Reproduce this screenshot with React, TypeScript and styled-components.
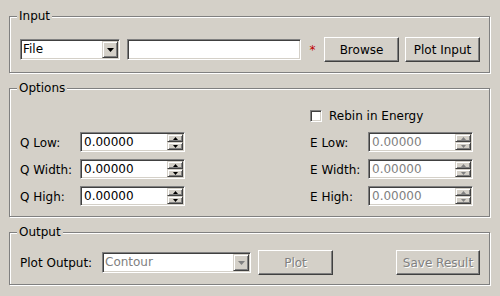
import React from "react";
import styled, { createGlobalStyle } from "styled-components";

const GlobalStyle = createGlobalStyle`
  html, body {
    margin: 0;
    padding: 0;
    background: #d4d0c8;
  }
  body {
    font-family: "DejaVu Sans", "Liberation Sans", sans-serif;
    font-size: 12px;
    color: #000;
  }
`;

const Page = styled.div`
  width: 500px;
  height: 296px;
  box-sizing: border-box;
  padding: 16px 10px 0 9px;
  display: flex;
  flex-direction: column;
  gap: 15px;
`;

const Group = styled.section<{ $pt: number; $pb: number }>`
  position: relative;
  border: 1px solid #808080;
  box-shadow: inset 1px 1px 0 #fff, 1px 1px 0 #fff;
  padding: ${(p) => p.$pt}px 9px ${(p) => p.$pb}px 10px;
`;

const GroupTitle = styled.span`
  position: absolute;
  top: -8px;
  left: 7px;
  padding: 0 2px;
  line-height: 14px;
  background: #d4d0c8;
`;

const Row = styled.div`
  display: flex;
  align-items: center;
`;

const ComboBox = styled.div<{ $width: number; $disabled?: boolean }>`
  width: ${(p) => p.$width}px;
  height: 21px;
  box-sizing: border-box;
  display: flex;
  align-items: center;
  background: #fff;
  border: 1px solid;
  border-color: #808080 #fff #fff #808080;
  box-shadow: inset 1px 1px 0 #404040, inset -1px -1px 0 #d4d0c8;
  padding: 1px;
  color: ${(p) => (p.$disabled ? "#808080" : "#000")};
`;

const ComboText = styled.span`
  flex: 1;
  padding-left: 1px;
  line-height: 17px;
`;

const ComboArrow = styled.div`
  width: 16px;
  height: 17px;
  box-sizing: border-box;
  display: flex;
  align-items: center;
  justify-content: center;
  background: #d4d0c8;
  border: 1px solid;
  border-color: #d4d0c8 #404040 #404040 #d4d0c8;
  box-shadow: inset 1px 1px 0 #fff, inset -1px -1px 0 #808080;
`;

const LineEdit = styled.div`
  width: 174px;
  height: 21px;
  margin-left: 7px;
  box-sizing: border-box;
  background: #fff;
  border: 1px solid;
  border-color: #808080 #fff #fff #808080;
  box-shadow: inset 1px 1px 0 #404040, inset -1px -1px 0 #d4d0c8;
`;

const Required = styled.span`
  width: 23px;
  text-align: center;
  color: #c00000;
  font-size: 12px;
`;

const PushButton = styled.div<{ $width: number; $gap?: number; $disabled?: boolean }>`
  width: ${(p) => p.$width}px;
  height: 25px;
  margin-left: ${(p) => p.$gap ?? 0}px;
  box-sizing: border-box;
  display: flex;
  align-items: center;
  justify-content: center;
  background: #d4d0c8;
  border: 1px solid;
  border-color: #fff #404040 #404040 #fff;
  box-shadow: inset -1px -1px 0 #808080;
  color: ${(p) => (p.$disabled ? "#808080" : "#000")};
  text-shadow: ${(p) => (p.$disabled ? "1px 1px 0 #fff" : "none")};
`;

const OptionsGrid = styled.div`
  display: grid;
  grid-template-columns: 60px 105px 1fr 58px 105px;
  grid-template-rows: 19px 21px 21px 21px;
  row-gap: 6px;
  margin-right: 7px;

  & > :first-child {
    margin-bottom: 1px;
  }
`;

const CheckRow = styled.label`
  grid-column: 4 / 6;
  display: flex;
  align-items: center;
  gap: 7px;
`;

const CheckBox = styled.span`
  width: 12px;
  height: 12px;
  box-sizing: border-box;
  background: #fff;
  border: 1px solid;
  border-color: #808080 #fff #fff #808080;
  box-shadow: inset 1px 1px 0 #404040, inset -1px -1px 0 #d4d0c8;
`;

const FieldLabel = styled.span<{ $col: number }>`
  grid-column: ${(p) => p.$col};
  align-self: center;
`;

const SpinBox = styled.div<{ $col: number; $disabled?: boolean }>`
  grid-column: ${(p) => p.$col};
  height: 20px;
  box-sizing: border-box;
  display: flex;
  align-items: center;
  background: #fff;
  border: 1px solid;
  border-color: #808080 #fff #fff #808080;
  box-shadow: inset 1px 1px 0 #404040, inset -1px -1px 0 #d4d0c8;
  padding: 1px;
  color: ${(p) => (p.$disabled ? "#808080" : "#000")};
`;

const SpinText = styled.span`
  flex: 1;
  padding-left: 2px;
`;

const SpinButtons = styled.div`
  display: flex;
  flex-direction: column;
  width: 16px;
  height: 16px;
`;

const SpinButton = styled.div`
  flex: 1;
  box-sizing: border-box;
  display: flex;
  align-items: center;
  justify-content: center;
  background: #d4d0c8;
  border: 1px solid;
  border-color: #d4d0c8 #404040 #404040 #d4d0c8;
  box-shadow: inset 1px 1px 0 #fff, inset -1px -1px 0 #808080;
`;

const OutputLabel = styled.span`
  width: 82px;
`;

const Spacer = styled.div`
  flex: 1;
`;

const Arrow = ({
  up,
  w,
  h,
  disabled,
}: {
  up?: boolean;
  w: number;
  h: number;
  disabled?: boolean;
}) => {
  const pts = up ? `0,${h} ${w / 2},0 ${w},${h}` : `0,0 ${w},0 ${w / 2},${h}`;
  return (
    <svg width={w} height={h} viewBox={`0 0 ${w} ${h}`} style={{ display: "block" }}>
      <polygon points={pts} fill={disabled ? "#808080" : "#000"} />
    </svg>
  );
};

const Combo = ({
  text,
  width,
  disabled,
}: {
  text: string;
  width: number;
  disabled?: boolean;
}) => (
  <ComboBox $width={width} $disabled={disabled}>
    <ComboText>{text}</ComboText>
    <ComboArrow>
      <Arrow w={7} h={4} disabled={disabled} />
    </ComboArrow>
  </ComboBox>
);

const Spin = ({ col, disabled }: { col: number; disabled?: boolean }) => (
  <SpinBox $col={col} $disabled={disabled}>
    <SpinText>0.00000</SpinText>
    <SpinButtons>
      <SpinButton>
        <Arrow up w={5} h={3} disabled={disabled} />
      </SpinButton>
      <SpinButton>
        <Arrow w={5} h={3} disabled={disabled} />
      </SpinButton>
    </SpinButtons>
  </SpinBox>
);

const rows = [
  ["Q Low:", "E Low:"],
  ["Q Width:", "E Width:"],
  ["Q High:", "E High:"],
];

export default function App() {
  return (
    <>
      <GlobalStyle />
      <Page>
        <Group $pt={20} $pb={10}>
          <GroupTitle>Input</GroupTitle>
          <Row>
            <Combo text="File" width={100} />
            <LineEdit />
            <Required>*</Required>
            <PushButton $width={75}>Browse</PushButton>
            <PushButton $width={75} $gap={6}>
              Plot Input
            </PushButton>
          </Row>
        </Group>

        <Group $pt={18} $pb={9}>
          <GroupTitle>Options</GroupTitle>
          <OptionsGrid>
            <CheckRow>
              <CheckBox />
              Rebin in Energy
            </CheckRow>
            {rows.map(([q, e]) => (
              <React.Fragment key={q}>
                <FieldLabel $col={1}>{q}</FieldLabel>
                <Spin col={2} />
                <FieldLabel $col={4}>{e}</FieldLabel>
                <Spin col={5} disabled />
              </React.Fragment>
            ))}
          </OptionsGrid>
        </Group>

        <Group $pt={17} $pb={9}>
          <GroupTitle>Output</GroupTitle>
          <Row>
            <OutputLabel>Plot Output:</OutputLabel>
            <Combo text="Contour" width={149} disabled />
            <PushButton $width={75} $gap={7} $disabled>
              Plot
            </PushButton>
            <Spacer />
            <PushButton $width={84} $disabled>
              Save Result
            </PushButton>
          </Row>
        </Group>
      </Page>
    </>
  );
}
